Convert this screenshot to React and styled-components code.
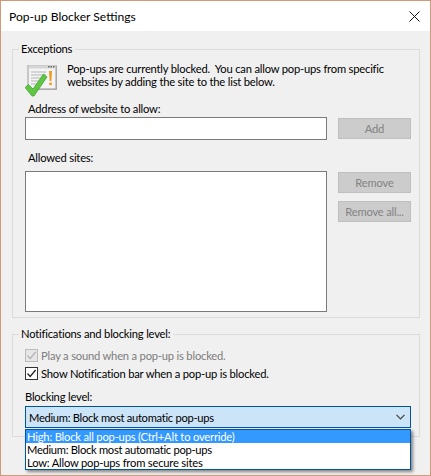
import React from 'react';
import styled, { createGlobalStyle } from 'styled-components';

const Global = createGlobalStyle`
  html, body { margin: 0; padding: 0; background: #f0f0f0; }
  body { font-family: Lato, "Open Sans", sans-serif; }
`;

const Window = styled.div`
  box-sizing: border-box;
  width: 431px;
  height: 476px;
  border: 1px solid #cf9a78;
  background: #f0f0f0;
  display: flex;
  flex-direction: column;
  position: relative;
  overflow: hidden;
  font-size: 11.2px;
  letter-spacing: -0.2px;
  line-height: 13px;
  color: #000;
`;

const TitleBar = styled.div`
  height: 30px;
  flex: none;
  background: #fff;
  display: flex;
  align-items: center;
  justify-content: space-between;
  padding: 0 10px 0 8px;
  font-size: 12.1px;
  letter-spacing: 0;
`;

const Body = styled.div`
  flex: 1;
  padding: 11px 11px 0;
  display: flex;
  flex-direction: column;
  gap: 9px;
`;

const Group = styled.fieldset`
  box-sizing: border-box;
  margin: 0;
  padding: 0 7px 0 12px;
  width: 408px;
  height: ${p => p.$height}px;
  border: 1px solid #dcdcdc;
  min-width: 0;
`;

const Legend = styled.legend`
  padding: 0 3px 0 2px;
  margin-left: -6px;
  line-height: 14px;
`;

const Message = styled.div`
  display: flex;
  gap: 10px;
  margin-top: 5px;
  height: 41px;
`;

const IconSlot = styled.div`
  flex: none;
  width: 32px;
  height: 32px;
  margin-top: 4px;
`;

const MessageText = styled.p`
  margin: 0;
  padding-top: 1px;
  white-space: pre;
`;

const Label = styled.div`
  margin-left: ${p => p.$indent || 0}px;
  margin-top: ${p => p.$top || 0}px;
  height: 13px;
`;

const Row = styled.div`
  display: flex;
  gap: 11px;
  margin-top: ${p => p.$top || 0}px;
`;

const Field = styled.div`
  box-sizing: border-box;
  width: 302px;
  height: ${p => p.$height}px;
  flex: none;
  background: #fff;
  border: 1px solid #7a7a7a;
`;

const Buttons = styled.div`
  display: flex;
  flex-direction: column;
  gap: 8px;
  padding-top: 1px;
`;

const Button = styled.div`
  box-sizing: border-box;
  width: 73px;
  height: 21px;
  background: #cccccc;
  border: 1px solid #bfbfbf;
  color: #838383;
  display: flex;
  align-items: center;
  justify-content: center;
  white-space: nowrap;
`;

const CheckRow = styled.div`
  display: flex;
  align-items: center;
  gap: 3px;
  height: 13px;
  margin-top: ${p => p.$top}px;
  color: ${p => (p.$disabled ? '#7d7d7d' : '#000')};
`;

const Box = styled.span`
  box-sizing: border-box;
  width: 13px;
  height: 13px;
  flex: none;
  border: 1px solid ${p => (p.$disabled ? '#bcbcbc' : '#333')};
  background: ${p => (p.$disabled ? '#e6e6e6' : '#fff')};
  display: flex;
  align-items: center;
  justify-content: center;
`;

const Combo = styled.div`
  box-sizing: border-box;
  width: 386px;
  height: 22px;
  margin-top: 3px;
  padding: 0 5px 0 3px;
  background: #cce4f7;
  border: 1px solid #005499;
  display: flex;
  align-items: center;
  justify-content: space-between;
`;

const ComboText = styled.span`
  letter-spacing: -0.3px;
`;

const Dropdown = styled.ul`
  position: absolute;
  left: 24px;
  top: 428px;
  box-sizing: border-box;
  width: 386px;
  height: 41px;
  margin: 0;
  padding: 0;
  list-style: none;
  background: #fff;
  border: 1px solid #005499;
  box-shadow: 2px 2px 3px rgba(0, 0, 0, 0.45);
`;

const Option = styled.li`
  height: 13px;
  padding-left: 1px;
  white-space: nowrap;
  color: ${p => (p.$active ? '#fff' : '#000')};
  background: ${p => (p.$active ? '#3399ff' : 'transparent')};
`;

const Check = ({ color }) => (
  <svg width="11" height="11" viewBox="0 0 11 11" fill="none">
    <path d="M1.5 5.5 L4.2 8.4 L9.6 2" stroke={color} strokeWidth="1.3" />
  </svg>
);

const InfoIcon = () => (
  <svg width="32" height="32" viewBox="0 0 32 32">
    <rect x="4" y="1" width="28" height="24" fill="#b9b9b9" />
    <rect x="3" y="0" width="28" height="24" fill="#f4f4f4" stroke="#9a9a9a" strokeWidth="1" />
    <rect x="3.5" y="0.5" width="27" height="3" fill="#d5d5d5" />
    <rect x="23" y="1" width="1.5" height="1.5" fill="#666" />
    <rect x="25.5" y="1" width="1.5" height="1.5" fill="#666" />
    <rect x="28" y="1" width="1.5" height="1.5" fill="#666" />
    <path d="M6 7h15M6 10h15M6 13h15M6 16h12M6 19h8" stroke="#b5b5b5" strokeWidth="1" />
    <path d="M24 6h3l-.6 10h-1.8z" fill="#f29a1d" />
    <rect x="24.3" y="17.6" width="2.5" height="2.5" fill="#f29a1d" />
    <path d="M0 22.5 L3.5 19.5 L8 24 L18.5 9 L22 12 L9 31 L7 31 Z" fill="#5fc644" stroke="#3d9e2c" strokeWidth="0.7" />
  </svg>
);

const Close = () => (
  <svg width="11" height="11" viewBox="0 0 11 11">
    <path d="M0.5 0.5 L10.5 10.5 M10.5 0.5 L0.5 10.5" stroke="#111" strokeWidth="1" fill="none" />
  </svg>
);

const Chevron = () => (
  <svg width="9" height="6" viewBox="0 0 9 6">
    <path d="M0.5 0.8 L4.5 4.8 L8.5 0.8" stroke="#444" strokeWidth="1.2" fill="none" />
  </svg>
);

export default function App() {
  return (
    <Window>
      <Global />
      <TitleBar>
        <span>Pop-up Blocker Settings</span>
        <Close />
      </TitleBar>
      <Body>
        <Group $height={276}>
          <Legend>Exceptions</Legend>
          <Message>
            <IconSlot><InfoIcon /></IconSlot>
            <MessageText>{'Pop-ups are currently blocked.  You can allow pop-ups from specific\nwebsites by adding the site to the list below.'}</MessageText>
          </Message>
          <Label $indent={3}>Address of website to allow:</Label>
          <Row $top={2}>
            <Field $height={23} />
            <Buttons><Button>Add</Button></Buttons>
          </Row>
          <Label $indent={3} $top={11}>Allowed sites:</Label>
          <Row $top={7}>
            <Field $height={141} />
            <Buttons>
              <Button>Remove</Button>
              <Button>Remove all...</Button>
            </Buttons>
          </Row>
        </Group>
        <Group $height={110}>
          <Legend>Notifications and blocking level:</Legend>
          <CheckRow $disabled $top={8}>
            <Box $disabled><Check color="#b4b4b4" /></Box>
            <span>Play a sound when a pop-up is blocked.</span>
          </CheckRow>
          <CheckRow $top={5}>
            <Box><Check color="#222" /></Box>
            <span>Show Notification bar when a pop-up is blocked.</span>
          </CheckRow>
          <Label $top={10}>Blocking level:</Label>
          <Combo>
            <ComboText>Medium: Block most automatic pop-ups</ComboText>
            <Chevron />
          </Combo>
        </Group>
      </Body>
      <Dropdown>
        <Option $active>High: Block all pop-ups (Ctrl+Alt to override)</Option>
        <Option><ComboText>Medium: Block most automatic pop-ups</ComboText></Option>
        <Option>Low: Allow pop-ups from secure sites</Option>
      </Dropdown>
    </Window>
  );
}
